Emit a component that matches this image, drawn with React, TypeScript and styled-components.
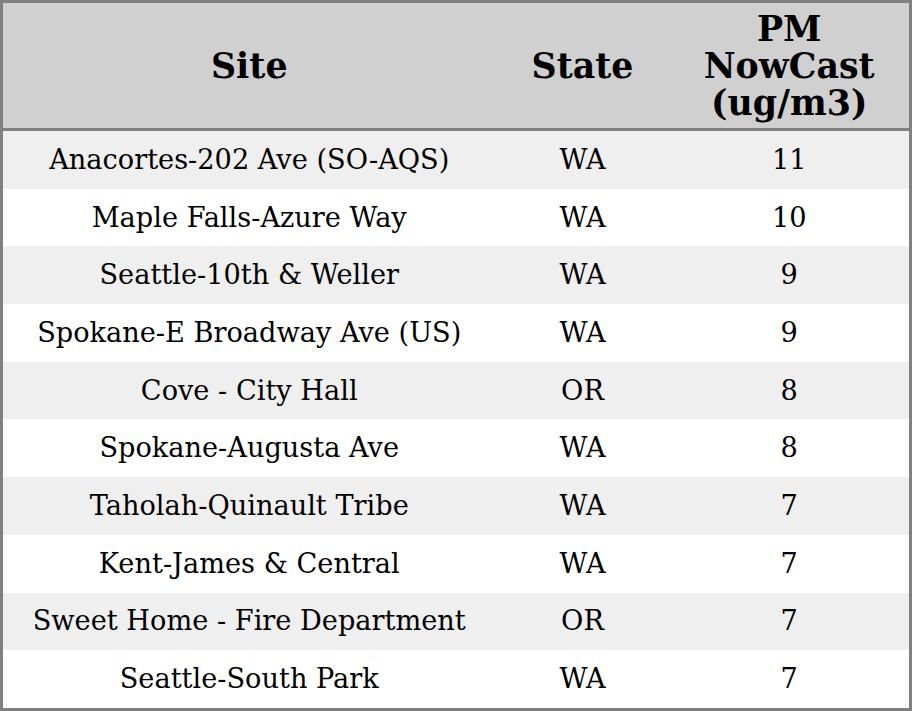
import { styled, createGlobalStyle } from "styled-components";

type Reading = {
  site: string;
  state: string;
  pm: number;
};

const readings: Reading[] = [
  { site: "Anacortes-202 Ave (SO-AQS)", state: "WA", pm: 11 },
  { site: "Maple Falls-Azure Way", state: "WA", pm: 10 },
  { site: "Seattle-10th & Weller", state: "WA", pm: 9 },
  { site: "Spokane-E Broadway Ave (US)", state: "WA", pm: 9 },
  { site: "Cove - City Hall", state: "OR", pm: 8 },
  { site: "Spokane-Augusta Ave", state: "WA", pm: 8 },
  { site: "Taholah-Quinault Tribe", state: "WA", pm: 7 },
  { site: "Kent-James & Central", state: "WA", pm: 7 },
  { site: "Sweet Home - Fire Department", state: "OR", pm: 7 },
  { site: "Seattle-South Park", state: "WA", pm: 7 },
];

const App = (): JSX.Element => {
  return (
    <>
      <GlobalS />
      <TableS>
        <colgroup>
          <col style={{ width: 494 }} />
          <col style={{ width: 174 }} />
          <col />
        </colgroup>
        <thead>
          <tr>
            <HeadCellS>Site</HeadCellS>
            <HeadCellS>State</HeadCellS>
            <HeadCellS>
              PM
              <br />
              NowCast
              <br />
              (ug/m3)
            </HeadCellS>
          </tr>
        </thead>
        <tbody>
          {readings.map((row, i) => (
            <RowS key={row.site} $striped={i % 2 === 0}>
              <CellS>{row.site}</CellS>
              <CellS>{row.state}</CellS>
              <CellS>{row.pm}</CellS>
            </RowS>
          ))}
        </tbody>
      </TableS>
    </>
  );
};

export default App;

const GlobalS = createGlobalStyle`
  body {
    margin: 0;
    background: #ffffff;
    font-family: "DejaVu Serif", serif;
  }
`;

/** 측정소 표 */
const TableS = styled.table`
  width: 912px;
  border-collapse: collapse;
  border: 3px solid #808080;
  font-family: "DejaVu Serif", serif;
  font-size: 27.2px;
  color: #000000;
`;

const HeadCellS = styled.th`
  background: #d0d0d0;
  border-bottom: 3px solid #808080;
  padding: 7px 0;
  font-size: 34.8px;
  line-height: 37px;
  font-weight: bold;
  text-align: center;
  vertical-align: middle;
`;

const RowS = styled.tr<{ $striped: boolean }>`
  background: ${(props) => (props.$striped ? "#efefef" : "#ffffff")};
`;

const CellS = styled.td`
  padding: 0;
  height: 57.7px;
  line-height: 32px;
  text-align: center;
  vertical-align: middle;
`;
